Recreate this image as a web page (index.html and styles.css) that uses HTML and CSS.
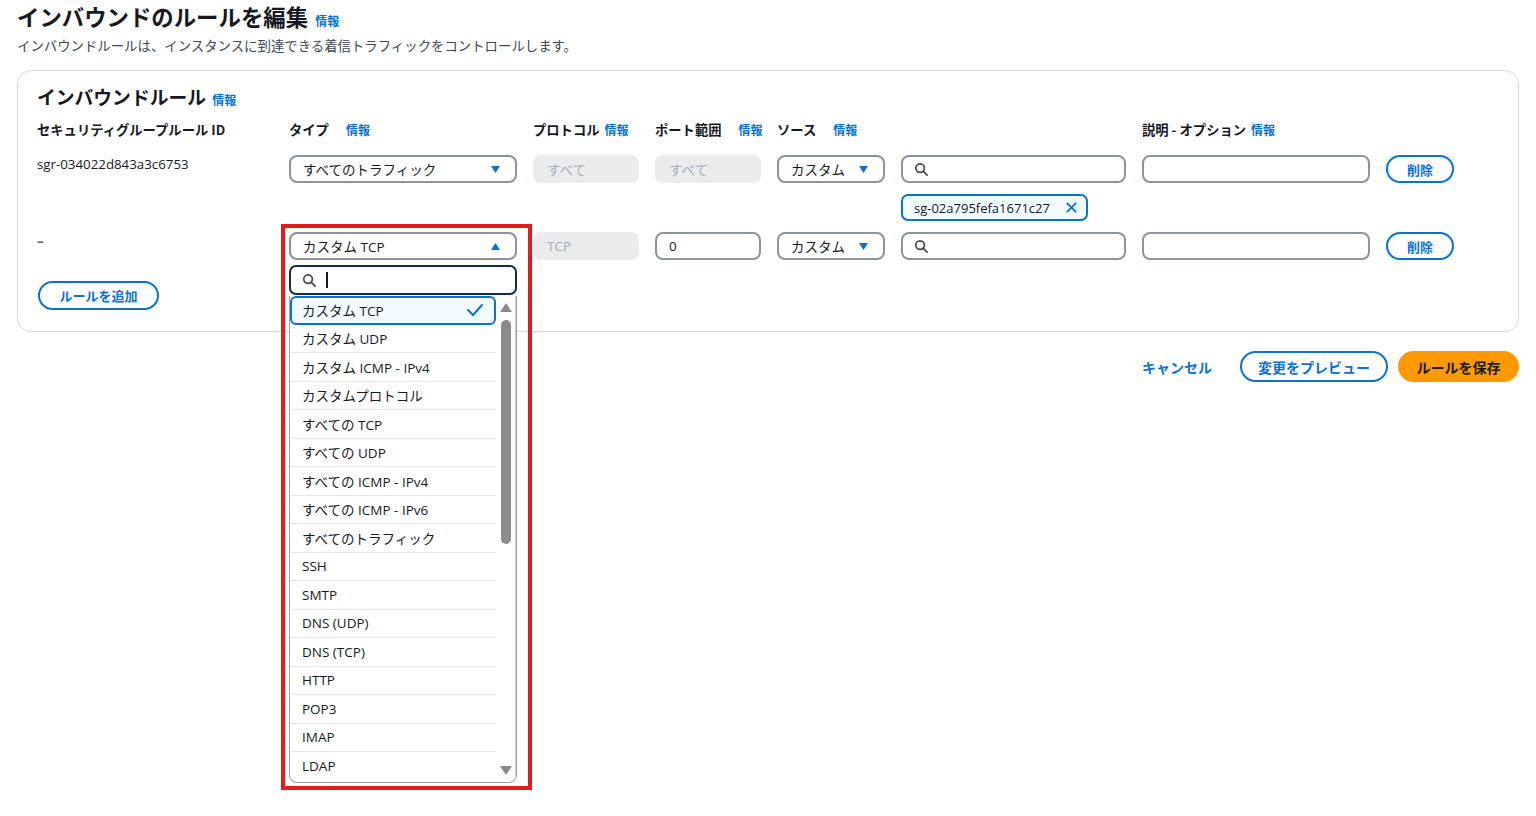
FILE: index.html
```html
<!DOCTYPE html>
<html lang="ja">
<head>
<meta charset="utf-8">
<title>インバウンドのルールを編集</title>
<link rel="stylesheet" href="styles.css">
</head>
<body>
<header class="page-head">
  <h1 class="page-title">インバウンドのルールを編集 <a class="info">情報</a></h1>
  <p class="page-desc">インバウンドルールは、インスタンスに到達できる着信トラフィックをコントロールします。</p>
</header>

<section class="panel">
  <h2 class="panel-title">インバウンドルール <a class="info">情報</a></h2>

  <div class="grid head-row">
    <div class="col-h">セキュリティグループルール ID</div>
    <div class="col-h">タイプ <a class="info gap">情報</a></div>
    <div class="col-h">プロトコル <a class="info">情報</a></div>
    <div class="col-h">ポート範囲 <a class="info gap">情報</a></div>
    <div class="col-h">ソース <a class="info gap">情報</a></div>
    <div class="col-h"></div>
    <div class="col-h">説明 - オプション <a class="info">情報</a></div>
    <div class="col-h"></div>
  </div>

  <div class="grid rule-row">
    <div class="rule-id">sgr-034022d843a3c6753</div>
    <div class="select"><span>すべてのトラフィック</span><svg class="caret" viewBox="0 0 12 10"><polygon points="1,1 11,1 6,9"/></svg></div>
    <div class="field disabled">すべて</div>
    <div class="field disabled">すべて</div>
    <div class="select"><span>カスタム</span><svg class="caret" viewBox="0 0 12 10"><polygon points="1,1 11,1 6,9"/></svg></div>
    <div class="search-cell">
      <div class="field search"><svg class="mag" viewBox="0 0 16 16"><circle cx="6.5" cy="6.5" r="4.6"/><line x1="10" y1="10" x2="14" y2="14"/></svg></div>
      <div class="token"><span>sg-02a795fefa1671c27</span><svg class="x" viewBox="0 0 14 14"><line x1="2" y1="2" x2="12" y2="12"/><line x1="12" y1="2" x2="2" y2="12"/></svg></div>
    </div>
    <div class="field"></div>
    <div><button class="btn-outline del">削除</button></div>
  </div>

  <div class="grid rule-row second">
    <div class="rule-id dash">–</div>
    <div class="type-cell">
      <div class="select open"><span>カスタム TCP</span><svg class="caret" viewBox="0 0 12 10"><polygon points="1,9 11,9 6,1"/></svg></div>
      <div class="dropdown">
        <div class="dd-search"><svg class="mag" viewBox="0 0 16 16"><circle cx="6.5" cy="6.5" r="4.6"/><line x1="10" y1="10" x2="14" y2="14"/></svg><span class="cursor"></span></div>
        <div class="dd-list">
          <ul class="dd-items">
            <li class="selected">カスタム TCP<svg class="check" viewBox="0 0 18 14"><polyline points="2,7 7,12 16,2"/></svg></li>
            <li>カスタム UDP</li>
            <li>カスタム ICMP - IPv4</li>
            <li>カスタムプロトコル</li>
            <li>すべての TCP</li>
            <li>すべての UDP</li>
            <li>すべての ICMP - IPv4</li>
            <li>すべての ICMP - IPv6</li>
            <li>すべてのトラフィック</li>
            <li>SSH</li>
            <li>SMTP</li>
            <li>DNS (UDP)</li>
            <li>DNS (TCP)</li>
            <li>HTTP</li>
            <li>POP3</li>
            <li>IMAP</li>
            <li class="last">LDAP</li>
          </ul>
          <div class="scrollbar">
            <svg class="sb-arrow" viewBox="0 0 12 10"><polygon points="0,10 12,10 6,1"/></svg>
            <div class="sb-track"><div class="sb-thumb"></div></div>
            <svg class="sb-arrow" viewBox="0 0 12 10"><polygon points="0,0 12,0 6,9"/></svg>
          </div>
        </div>
      </div>
      <div class="highlight"></div>
    </div>
    <div class="field disabled">TCP</div>
    <div class="field value">0</div>
    <div class="select"><span>カスタム</span><svg class="caret" viewBox="0 0 12 10"><polygon points="1,1 11,1 6,9"/></svg></div>
    <div class="field search"><svg class="mag" viewBox="0 0 16 16"><circle cx="6.5" cy="6.5" r="4.6"/><line x1="10" y1="10" x2="14" y2="14"/></svg></div>
    <div class="field"></div>
    <div><button class="btn-outline del">削除</button></div>
  </div>

  <div class="add-row"><button class="btn-outline add">ルールを追加</button></div>
</section>

<footer class="actions">
  <a class="link-btn">キャンセル</a>
  <button class="btn-outline preview">変更をプレビュー</button>
  <button class="btn-primary">ルールを保存</button>
</footer>
</body>
</html>
```

FILE: styles.css
```css
* { box-sizing: border-box; }
html, body { margin: 0; padding: 0; background: #fff; }
body {
  font-family: "Open Sans", "Noto Sans CJK JP", sans-serif;
  color: #16191f;
  padding: 0 17px;
  width: 1536px;
  height: 816px;
  overflow: hidden;
}
.page-head { padding-top: 2px; }
.page-title {
  margin: 0;
  font-size: 22.4px;
  line-height: 28px;
  height: 28px;
  font-weight: 700;
  font-family: "Noto Sans CJK JP", sans-serif;
}
.info {
  color: #0972d3;
  font-size: 12px;
  line-height: 1;
  font-weight: 700;
  font-family: "Noto Sans CJK JP", sans-serif;
  margin-left: 2px;
  vertical-align: baseline;
}
.info.gap { margin-left: 14px; }
.page-desc {
  margin: 5px 0 0;
  font-size: 13.4px;
  line-height: 20px;
  height: 20px;
  color: #414750;
  font-family: "Noto Sans CJK JP", sans-serif;
}
.panel {
  margin-top: 15px;
  border: 1px solid #d5d9de;
  border-radius: 14px;
  padding: 13px 20px 21px 19px;
}
.panel-title {
  margin: 0;
  font-size: 18.8px;
  line-height: 26px;
  height: 26px;
  font-weight: 700;
  font-family: "Noto Sans CJK JP", sans-serif;
}
.grid {
  display: grid;
  grid-template-columns: 236px 228px 106px 106px 108px 225px 228px 68px;
  column-gap: 16px;
  align-items: start;
}
.head-row { margin-top: 11px; margin-bottom: 16px; height: 18px; }
.col-h {
  font-size: 13.3px;
  line-height: 18px;
  height: 18px;
  font-weight: 700;
  white-space: nowrap;
  font-family: "Noto Sans CJK JP", sans-serif;
}
.rule-row.second { margin-top: 11px; }
.rule-id {
  font-size: 13.3px;
  line-height: 18px;
  color: #16191f;
}
.rule-id.dash { color: #5f6b7a; font-weight: 700; }
.select, .field {
  height: 28px;
  border: 2px solid #8c939c;
  border-radius: 8px;
  background: #fff;
  display: flex;
  align-items: center;
  padding: 0 12px;
  font-size: 13.5px;
  font-family: "Open Sans", "Noto Sans CJK JP", sans-serif;
  color: #16191f;
}
.select { justify-content: space-between; }
.caret { width: 11px; height: 9px; fill: #0972d3; margin-right: 2px; }
.field.disabled {
  background: #e9ebed;
  border-color: #e9ebed;
  color: #a7afb9;
}
.field.search { padding-left: 11px; }
.mag { width: 15px; height: 15px; fill: none; stroke: #414750; stroke-width: 1.8; stroke-linecap: round; }
.token {
  margin-top: 11px;
  width: 187px;
  height: 27px;
  border: 2px solid #0972d3;
  border-radius: 7px;
  background: #f1faff;
  display: flex;
  align-items: center;
  justify-content: space-between;
  padding: 0 8px 0 11px;
  font-size: 13px;
  color: #16191f;
}
.x { width: 13px; height: 13px; stroke: #0972d3; stroke-width: 2; }
.btn-outline {
  border: 2px solid #0972d3;
  background: #fff;
  color: #0972d3;
  border-radius: 20px;
  font-weight: 700;
  font-size: 13px;
  font-family: "Noto Sans CJK JP", sans-serif;
  padding: 0;
  cursor: pointer;
}
.del { width: 68px; height: 28px; }
.add-row { margin-top: 21px; height: 29px; }
.add { width: 121px; height: 29px; margin-left: 1px; }

.type-cell { position: relative; }
.dropdown {
  position: absolute;
  left: 0;
  top: 33px;
  width: 228px;
  z-index: 5;
}
.dd-search {
  height: 30px;
  border: 2px solid #0f2b54;
  border-radius: 7px;
  background: #fff;
  display: flex;
  align-items: center;
  padding-left: 11px;
}
.cursor { display: block; width: 2px; height: 16px; background: #16191f; margin-left: 9px; }
.dd-list {
  margin-top: 1px;
  height: 487px;
  border: 1px solid #9aa0a8;
  border-top: none;
  border-radius: 0 0 8px 8px;
  background: #fff;
  display: flex;
  overflow: hidden;
}
.dd-items {
  list-style: none;
  margin: 0;
  padding: 0;
  width: 206px;
}
.dd-items li {
  height: 28.5px;
  display: flex;
  align-items: center;
  justify-content: space-between;
  padding: 0 12px;
  font-size: 13.5px;
  color: #16191f;
  border-bottom: 1px solid #e3e5e8;
  white-space: nowrap;
}
.dd-items li.last { border-bottom: none; }
.dd-items li.selected {
  background: #f1faff;
  border: 2px solid #0972d3;
  border-radius: 6px;
  padding: 0 10px;
}
.check { width: 18px; height: 14px; fill: none; stroke: #0972d3; stroke-width: 2; stroke-linecap: round; stroke-linejoin: round; }
.scrollbar {
  flex: 1;
  display: flex;
  flex-direction: column;
  align-items: center;
  padding: 6px 0 6px;
  border-right: 1px solid #c9cdd2;
}
.sb-arrow { width: 12px; height: 10px; fill: #8a8a8a; flex: none; }
.sb-track { flex: 1; width: 100%; display: flex; justify-content: center; padding-top: 8px; }
.sb-thumb { width: 10px; height: 224px; background: #8a8a8a; border-radius: 5px; }
.highlight {
  position: absolute;
  left: -8px;
  top: -8px;
  width: 251px;
  height: 566px;
  border: 4px solid #e31b1b;
  pointer-events: none;
  z-index: 6;
}

.actions {
  margin-top: 19px;
  display: flex;
  justify-content: flex-end;
  align-items: center;
}
.link-btn {
  color: #0972d3;
  font-weight: 700;
  font-size: 14px;
  font-family: "Noto Sans CJK JP", sans-serif;
  margin-right: 28px;
}
.preview { width: 148px; height: 31px; font-size: 14px; }
.btn-primary {
  margin-left: 10px;
  width: 121px;
  height: 31px;
  border: none;
  border-radius: 20px;
  background: #ff9900;
  color: #16191f;
  font-weight: 700;
  font-size: 14px;
  font-family: "Noto Sans CJK JP", sans-serif;
  padding: 0;
}
```
